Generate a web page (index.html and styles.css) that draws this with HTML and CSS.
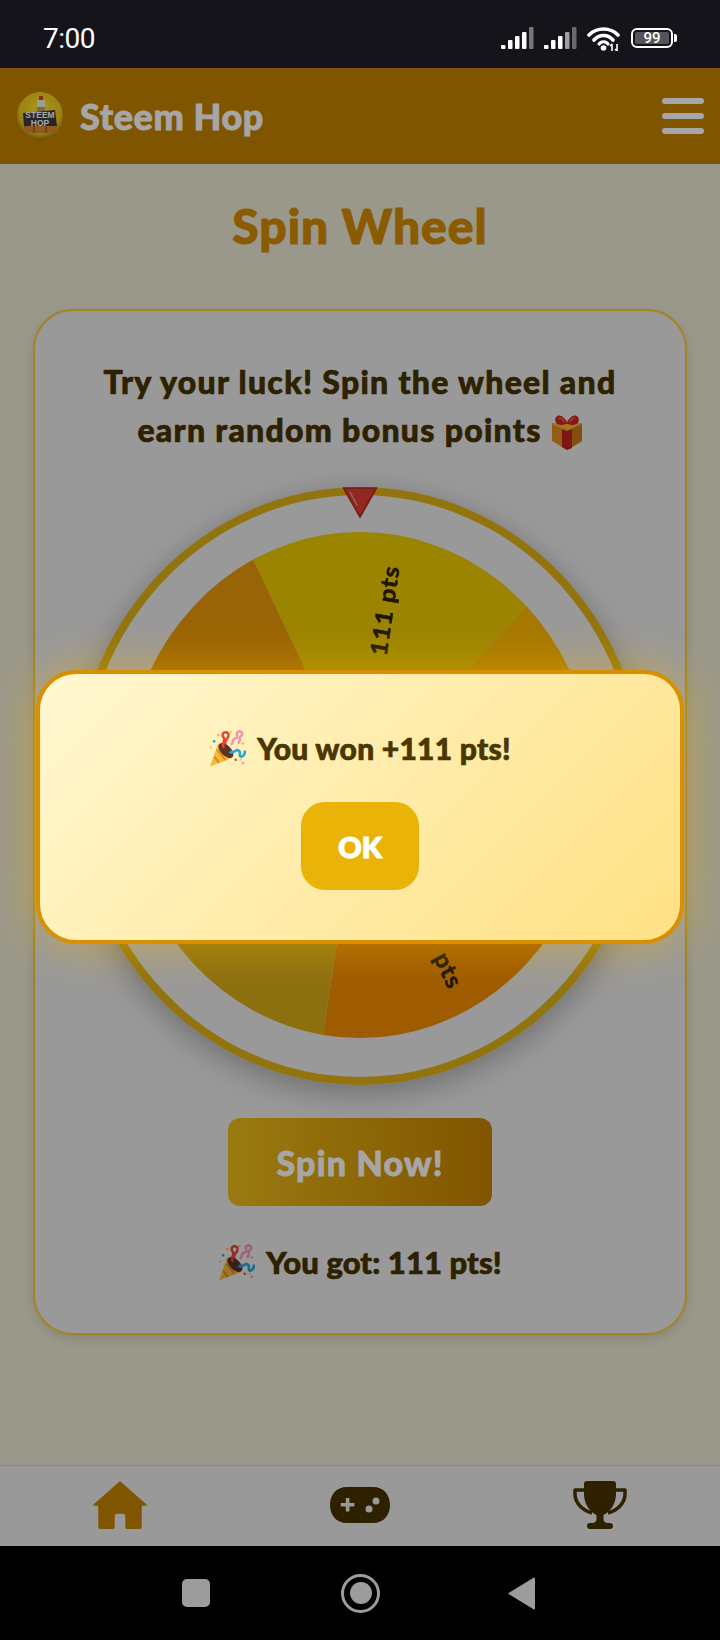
FILE: index.html
```html
<!DOCTYPE html>
<html lang="en">
<head>
    <meta charset="UTF-8">
    <meta name="viewport" content="width=device-width, initial-scale=1.0">
    <title>Steem Hop - Spin Wheel</title>
    <link rel="stylesheet" href="styles.css">
</head>
<body>
    <svg class="defs" width="0" height="0">
        <symbol id="popper" viewBox="0 0 36 36">
            <path d="M1 35.500 L9 13 L23 27 Z" fill="#f6b83a"/>
            <path d="M5 26 L10 32 M8 19 L16 29" stroke="#e08a1e" stroke-width="2" fill="none"/>
            <ellipse cx="16.500" cy="20" rx="5" ry="9" transform="rotate(-45 16.500 20)" fill="#5a3324"/>
            <path d="M15 17 C10 13 18 11 14 7 C11 3 17 0 19 4 C20 9 14 9 16 14" stroke="#e8443c" stroke-width="2.400" fill="none"/>
            <path d="M21 14 C25 13 21 9 26 8 C30 7 25 4 28 2 C31 0 34 4 31 6 C28 8 32 11 28 13" stroke="#f294b4" stroke-width="2.400" fill="none"/>
            <path d="M20 21 C24 24 26 18 29 20 C32 22 28 25 31 26 C33 26 35 24 35 20" stroke="#2aa4e0" stroke-width="2.600" fill="none"/>
            <circle cx="5" cy="11" r="1.3" fill="#2aa4e0"/>
            <circle cx="9" cy="5" r="1.2" fill="#f6b83a"/>
            <circle cx="21" cy="2" r="1.1" fill="#f6b83a"/>
            <circle cx="2" cy="17" r="1" fill="#f6b83a"/>
            <circle cx="33" cy="13" r="1.2" fill="#f6b83a"/>
            <circle cx="26" cy="29" r="1.2" fill="#e8443c"/>
            <circle cx="33" cy="32" r="1.3" fill="#f294b4"/>
            <circle cx="31" cy="29" r="1" fill="#f6b83a"/>
        </symbol>
        <symbol id="gift" viewBox="0 0 32 36">
            <path d="M16 13 L31 9 V27 L16 36 L1 27 V9 Z" fill="#e08f22"/>
            <path d="M16 6 L31 10 L16 17 L1 10 Z" fill="#f4b734"/>
            <path d="M16 17 L31 10 V27 L16 36 Z" fill="#c9781a"/>
            <path d="M11 15 L16 17 L21 15 V34 L16 36 L11 33 Z" fill="#c3231f"/>
            <path d="M15 10 C7 13 2 8 5 3 C8 -1 14 3 16 9 C18 3 24 -1 27 3 C30 8 25 13 17 10 Z" fill="#d3241f"/>
            <path d="M8 5 C9 3 12 5 13 8 M24 5 C23 3 20 5 19 8" stroke="#ef6a5a" stroke-width="1.2" fill="none"/>
        </symbol>
    </svg>

    <div class="status-bar">
        <span class="clock">7:00</span>
        <div class="status-icons">
            <svg class="signal" viewBox="0 0 33 22">
                <rect x="0" y="18" width="4.5" height="4" rx="1" fill="#fff"/>
                <rect x="7" y="13" width="4.5" height="9" rx="1" fill="#fff"/>
                <rect x="14" y="9" width="4.5" height="13" rx="1" fill="#fff"/>
                <rect x="21" y="5" width="4.5" height="17" rx="1" fill="#fff"/>
                <rect x="28" y="0" width="4.5" height="22" rx="1" fill="#77777a"/>
            </svg>
            <svg class="signal" viewBox="0 0 33 22">
                <rect x="0" y="18" width="4.5" height="4" rx="1" fill="#fff"/>
                <rect x="7" y="13" width="4.5" height="9" rx="1" fill="#fff"/>
                <rect x="14" y="9" width="4.5" height="13" rx="1" fill="#fff"/>
                <rect x="21" y="5" width="4.5" height="17" rx="1" fill="#a0a0a2"/>
                <rect x="28" y="0" width="4.5" height="22" rx="1" fill="#6a6a6d"/>
            </svg>
            <svg class="wifi" viewBox="0 0 33 25">
                <path d="M2 9 C10 1 23 1 31 9" stroke="#fff" stroke-width="3.6" fill="none" stroke-linecap="round"/>
                <path d="M7 14 C12 8 21 8 26 14" stroke="#fff" stroke-width="3.6" fill="none" stroke-linecap="round"/>
                <path d="M12 18 C14 15 19 15 21 18" stroke="#fff" stroke-width="3.2" fill="none" stroke-linecap="round"/>
                <circle cx="16.500" cy="22" r="2.800" fill="#fff"/>
                <path d="M25 25 V18 M23 20 L25 18 M30 18 V25 M28 23 L30 25" stroke="#fff" stroke-width="1.600" fill="none"/>
            </svg>
            <div class="battery">
                <div class="battery-body"><span class="battery-level">99</span></div>
                <span class="battery-nub"></span>
            </div>
        </div>
    </div>

    <div class="app">
        <header class="top-bar">
            <div class="brand">
                <svg class="logo" viewBox="0 0 46 48">
                    <defs>
                        <radialGradient id="logoBg" cx="50%" cy="40%" r="60%">
                            <stop offset="0" stop-color="#ffee30"/>
                            <stop offset="0.75" stop-color="#f2c818"/>
                            <stop offset="1" stop-color="#9c7c10"/>
                        </radialGradient>
                    </defs>
                    <ellipse cx="23" cy="24" rx="23" ry="24" fill="url(#logoBg)"/>
                    <rect x="20" y="8" width="8" height="11" fill="#f5efdc"/>
                    <rect x="22" y="4" width="4" height="4" fill="#e0402a"/>
                    <rect x="20" y="15" width="8" height="4" fill="#b9a46c"/>
                    <path d="M6 21 L38 18 L40 34 L7 35 Z" fill="#3c3c40"/>
                    <text class="logo-text" x="23" y="26" text-anchor="middle">STEEM</text>
                    <text class="logo-text" x="23" y="34" text-anchor="middle">HOP</text>
                    <rect x="7" y="34" width="33" height="7" rx="1" fill="#e08a2a"/>
                    <path d="M17 34 V41 M29 34 V41" stroke="#8a4e10" stroke-width="1"/>
                </svg>
                <span class="brand-name">Steem Hop</span>
            </div>
            <div class="menu-btn"><span></span><span></span><span></span></div>
        </header>

        <main class="content">
            <h1 class="page-title">Spin Wheel</h1>
            <section class="spin-card">
                <p class="intro">Try your luck! Spin the wheel and<br>earn random bonus points <svg class="gift-emoji"><use href="#gift"/></svg></p>

                <div class="wheel">
                    <svg class="wheel-face" viewBox="-298 -291 596 582" preserveAspectRatio="none">
                        <g transform="translate(-299 -300)">
                            <g class="pie">
                                <path d="M299 299 L184.100 73.600 A253 253 0 0 1 477.900 120.100 Z" fill="#eecb00"/>
                                <path d="M299 299 L477.900 120.100 A253 253 0 0 1 524.400 413.900 Z" fill="#ffb900"/>
                                <path d="M299 299 L524.400 413.900 A253 253 0 0 1 259.400 548.900 Z" fill="#f38d00"/>
                                <path d="M299 299 L259.400 548.900 A253 253 0 0 1 49.100 338.600 Z" fill="#d7ac19"/>
                                <path d="M299 299 L49.100 338.600 A253 253 0 0 1 184.100 73.600 Z" fill="#eb9a08"/>
                                <text class="slice-label" transform="translate(299 299) rotate(-81)" x="222" y="8" text-anchor="end">111 pts</text>
                                <text class="slice-label wide-gap" transform="translate(299 299) rotate(63)" x="227" y="8" text-anchor="end">50 pts</text>
                                <text class="slice-label" transform="translate(299 299) rotate(135)" x="222" y="8" text-anchor="end">25 pts</text>
                            </g>
                        </g>
                    </svg>
                    <svg class="pointer" viewBox="0 0 36 31">
                        <path d="M1.500 1 H34.500 L18 30 Z" fill="#e03c30" stroke="#b52a22" stroke-width="1.600" stroke-linejoin="round"/>
                        <path d="M8 5 L15 18" stroke="#f59a90" stroke-width="1.400" stroke-linecap="round"/>
                    </svg>
                </div>

                <button class="spin-btn">Spin Now!</button>
                <p class="result"><svg class="popper-emoji"><use href="#popper"/></svg>You got: 111 pts!</p>
            </section>
        </main>

        <nav class="bottom-nav">
            <a class="nav-item">
                <svg class="nav-home" viewBox="0 0 54 48">
                    <path d="M27 1 L53 24 H48 V45 A3 3 0 0 1 45 48 H36 A3 3 0 0 1 33 45 V35 A3 3 0 0 0 30 32 H24 A3 3 0 0 0 21 35 V45 A3 3 0 0 1 18 48 H9 A3 3 0 0 1 6 45 V24 H1 Z" stroke-width="1.500" stroke-linejoin="round"/>
                </svg>
            </a>
            <a class="nav-item">
                <svg class="nav-game" viewBox="0 0 60 36">
                    <path fill-rule="evenodd" d="M17 0 H43 C54 0 60 8 60 18 C60 28 54 36 43 36 H17 C6 36 0 28 0 18 C0 8 6 0 17 0 Z M15.800 11 V16 H10.800 V19.600 H15.800 V24.600 H19.400 V19.600 H24.400 V16 H19.400 V11 Z M46 10.500 A3.500 3.500 0 1 0 46 17.500 A3.500 3.500 0 1 0 46 10.500 Z M39 18.500 A3.500 3.500 0 1 0 39 25.500 A3.500 3.500 0 1 0 39 18.500 Z"/>
                </svg>
            </a>
            <a class="nav-item">
                <svg class="nav-trophy" viewBox="0 0 54 48">
                    <path class="cup" d="M14 0 H40 A3 3 0 0 1 43 3 V13 C43 25 35 32 30.500 34 V38 C30.500 41 33 42 35 42 H37 A3 3 0 0 1 37 48 H17 A3 3 0 0 1 17 42 H19 C21 42 23.500 41 23.500 38 V34 C19 32 11 25 11 13 V3 A3 3 0 0 1 14 0 Z"/>
                    <path class="handle" d="M12 9 H2 V13 C2 23 11 30 19 32 M42 9 H52 V13 C52 23 43 30 35 32"/>
                </svg>
            </a>
        </nav>

        <div class="backdrop">
            <div class="win-modal">
                <p class="win-text"><svg class="popper-emoji"><use href="#popper"/></svg>You won +111 pts!</p>
                <button class="ok-btn">OK</button>
            </div>
        </div>
    </div>

    <div class="system-nav">
        <span class="sys-square"></span>
        <span class="sys-circle"><span></span></span>
        <svg class="sys-back" viewBox="0 0 27 33">
            <path d="M26 1.500 V31.500 L1.500 16.500 Z" stroke-width="2" stroke-linejoin="round"/>
        </svg>
    </div>
</body>
</html>
```

FILE: styles.css
```css
* {
    box-sizing: border-box;
}

html,
body {
    margin: 0;
    padding: 0;
}

body {
    width: 720px;
    height: 1640px;
    display: flex;
    flex-direction: column;
    overflow: hidden;
    font-family: 'Lato', 'Noto Sans', sans-serif;
    background-color: #000;
}

p,
h1 {
    margin: 0;
}

.defs {
    position: absolute;
}

/* status bar */
.status-bar {
    height: 68px;
    flex-shrink: 0;
    display: flex;
    align-items: center;
    justify-content: space-between;
    padding: 8px 43px 0 43px;
    background-color: #14141a;
    color: #fff;
}

.clock {
    font-family: 'Roboto', sans-serif;
    font-size: 28px;
    letter-spacing: -0.5px;
}

.status-icons {
    display: flex;
    align-items: center;
}

.signal {
    width: 33px;
    height: 22px;
    margin-right: 10px;
}

.wifi {
    width: 33px;
    height: 25px;
    margin-right: 11px;
}

.battery {
    display: flex;
    align-items: center;
}

.battery-body {
    width: 42px;
    height: 20px;
    border: 2px solid #fff;
    border-radius: 6px;
    padding: 2px;
}

.battery-level {
    display: block;
    height: 100%;
    background-color: #55555a;
    border-radius: 2px;
    color: #fff;
    font-family: 'Roboto', sans-serif;
    font-size: 15px;
    font-weight: 500;
    line-height: 12px;
    text-align: center;
}

.battery-nub {
    width: 3px;
    height: 8px;
    margin-left: 1px;
    background-color: #fff;
    border-radius: 0 2px 2px 0;
}

/* app */
.app {
    position: relative;
    flex: 1;
    display: flex;
    flex-direction: column;
    background-color: #edead4;
}

.top-bar {
    height: 96px;
    flex-shrink: 0;
    display: flex;
    align-items: center;
    justify-content: space-between;
    padding: 0 16px 0 17px;
    background-color: #c58300;
}

.brand {
    display: flex;
    align-items: center;
    gap: 17px;
}

.logo {
    width: 46px;
    height: 48px;
}

.logo-text {
    font-family: 'Liberation Sans', sans-serif;
    font-size: 8.500px;
    font-weight: 700;
    fill: #fff;
}

.brand-name {
    color: #fff;
    font-size: 36px;
    font-weight: 900;
    letter-spacing: 0.6px;
    -webkit-text-stroke: 0.8px #fff;
}

.menu-btn {
    display: flex;
    flex-direction: column;
    gap: 9px;
}

.menu-btn span {
    display: block;
    width: 42px;
    height: 6px;
    background-color: #fff;
    border-radius: 3px;
}

.content {
    flex: 1;
    padding: 34px 33px 0 33px;
}

.page-title {
    height: 56px;
    margin-bottom: 55px;
    color: #d48c00;
    font-size: 48px;
    font-weight: 900;
    line-height: 56px;
    text-align: center;
    letter-spacing: 1px;
    -webkit-text-stroke: 1px #d48c00;
}

.spin-card {
    height: 1026px;
    display: flex;
    flex-direction: column;
    align-items: center;
    padding-top: 47px;
    background-color: #ebebeb;
    border: 2px solid #ffc933;
    border-radius: 40px;
    box-shadow: 0 4px 12px rgba(0, 0, 0, 0.12);
}

.intro {
    color: #473400;
    font-size: 32px;
    font-weight: 900;
    line-height: 48px;
    text-align: center;
    letter-spacing: 1.3px;
    -webkit-text-stroke: 0.7px #473400;
}

.gift-emoji {
    width: 32px;
    height: 36px;
    vertical-align: -8px;
}

.wheel {
    position: relative;
    width: 570px;
    height: 598px;
    flex-shrink: 0;
    margin-top: 33px;
    border: 8px solid #e1b217;
    border-radius: 50%;
    box-shadow: 0 8px 30px rgba(0, 0, 0, 0.28);
}

.wheel-face {
    display: block;
    width: 554px;
    height: 582px;
    overflow: visible;
}

.pie {
    filter: blur(0.7px);
}

.slice-label {
    fill: #2e2200;
    stroke: #2e2200;
    stroke-width: 0.6px;
    font-size: 25px;
    font-weight: 700;
    letter-spacing: 1px;
}

.wide-gap {
    word-spacing: 6px;
}

.pointer {
    position: absolute;
    top: -8px;
    left: 259px;
    width: 36px;
    height: 31px;
}

.spin-btn {
    width: 264px;
    height: 88px;
    margin-top: 33px;
    border: none;
    border-radius: 12px;
    background: linear-gradient(90deg, #edbc19, #c58300);
    color: #fff;
    font-family: inherit;
    font-size: 34px;
    font-weight: 900;
    letter-spacing: 1.2px;
    -webkit-text-stroke: 0.8px #fff;
}

.result {
    margin-top: 32px;
    color: #473400;
    font-size: 31px;
    font-weight: 900;
    line-height: 48px;
    letter-spacing: 0.1px;
    -webkit-text-stroke: 0.7px #473400;
}

.popper-emoji {
    width: 37px;
    height: 37px;
    margin-right: 11px;
    vertical-align: -7px;
}

/* bottom nav */
.bottom-nav {
    height: 81px;
    flex-shrink: 0;
    display: grid;
    grid-template-columns: repeat(3, 1fr);
    background-color: #ebebeb;
    border-top: 1px solid #d8d8d0;
}

.nav-item {
    display: flex;
    align-items: center;
    justify-content: center;
    padding-bottom: 2px;
}

.nav-home {
    width: 54px;
    height: 48px;
    fill: #c58300;
    stroke: #c58300;
}

.nav-game {
    width: 60px;
    height: 36px;
    fill: #473400;
}

.nav-trophy {
    width: 54px;
    height: 48px;
}

.nav-trophy .cup {
    fill: #473400;
}

.nav-trophy .handle {
    fill: none;
    stroke: #473400;
    stroke-width: 3.500px;
    stroke-linejoin: round;
}

/* win popup */
.backdrop {
    position: absolute;
    inset: 0;
    display: flex;
    align-items: center;
    justify-content: center;
    background-color: rgba(0, 0, 0, 0.35);
}

.win-modal {
    width: 648px;
    height: 274px;
    display: flex;
    flex-direction: column;
    align-items: center;
    padding-top: 50px;
    background: linear-gradient(135deg, #fff8d2, #ffe184);
    border: 4px solid #d98f00;
    border-radius: 40px;
    box-shadow: 0 0 50px rgba(255, 190, 0, 0.45);
}

.win-text {
    color: #4a3600;
    font-size: 30px;
    font-weight: 900;
    line-height: 48px;
    letter-spacing: 0.25px;
    -webkit-text-stroke: 0.7px #4a3600;
}

.ok-btn {
    width: 118px;
    height: 88px;
    margin-top: 30px;
    border: none;
    border-radius: 24px;
    background-color: #e9b308;
    color: #fff;
    font-family: inherit;
    font-size: 29px;
    font-weight: 900;
    -webkit-text-stroke: 1.2px #fff;
}

/* android nav */
.system-nav {
    height: 94px;
    flex-shrink: 0;
    display: flex;
    align-items: center;
    padding-left: 182px;
    background-color: #000;
}

.sys-square {
    width: 28px;
    height: 28px;
    background-color: #9c9c9c;
    border-radius: 5px;
}

.sys-circle {
    width: 39px;
    height: 39px;
    margin-left: 131px;
    display: flex;
    align-items: center;
    justify-content: center;
    border: 3px solid #9c9c9c;
    border-radius: 50%;
}

.sys-circle span {
    width: 22px;
    height: 22px;
    background-color: #9c9c9c;
    border-radius: 50%;
}

.sys-back {
    width: 27px;
    height: 33px;
    margin-left: 128px;
    fill: #9c9c9c;
    stroke: #9c9c9c;
}
```
